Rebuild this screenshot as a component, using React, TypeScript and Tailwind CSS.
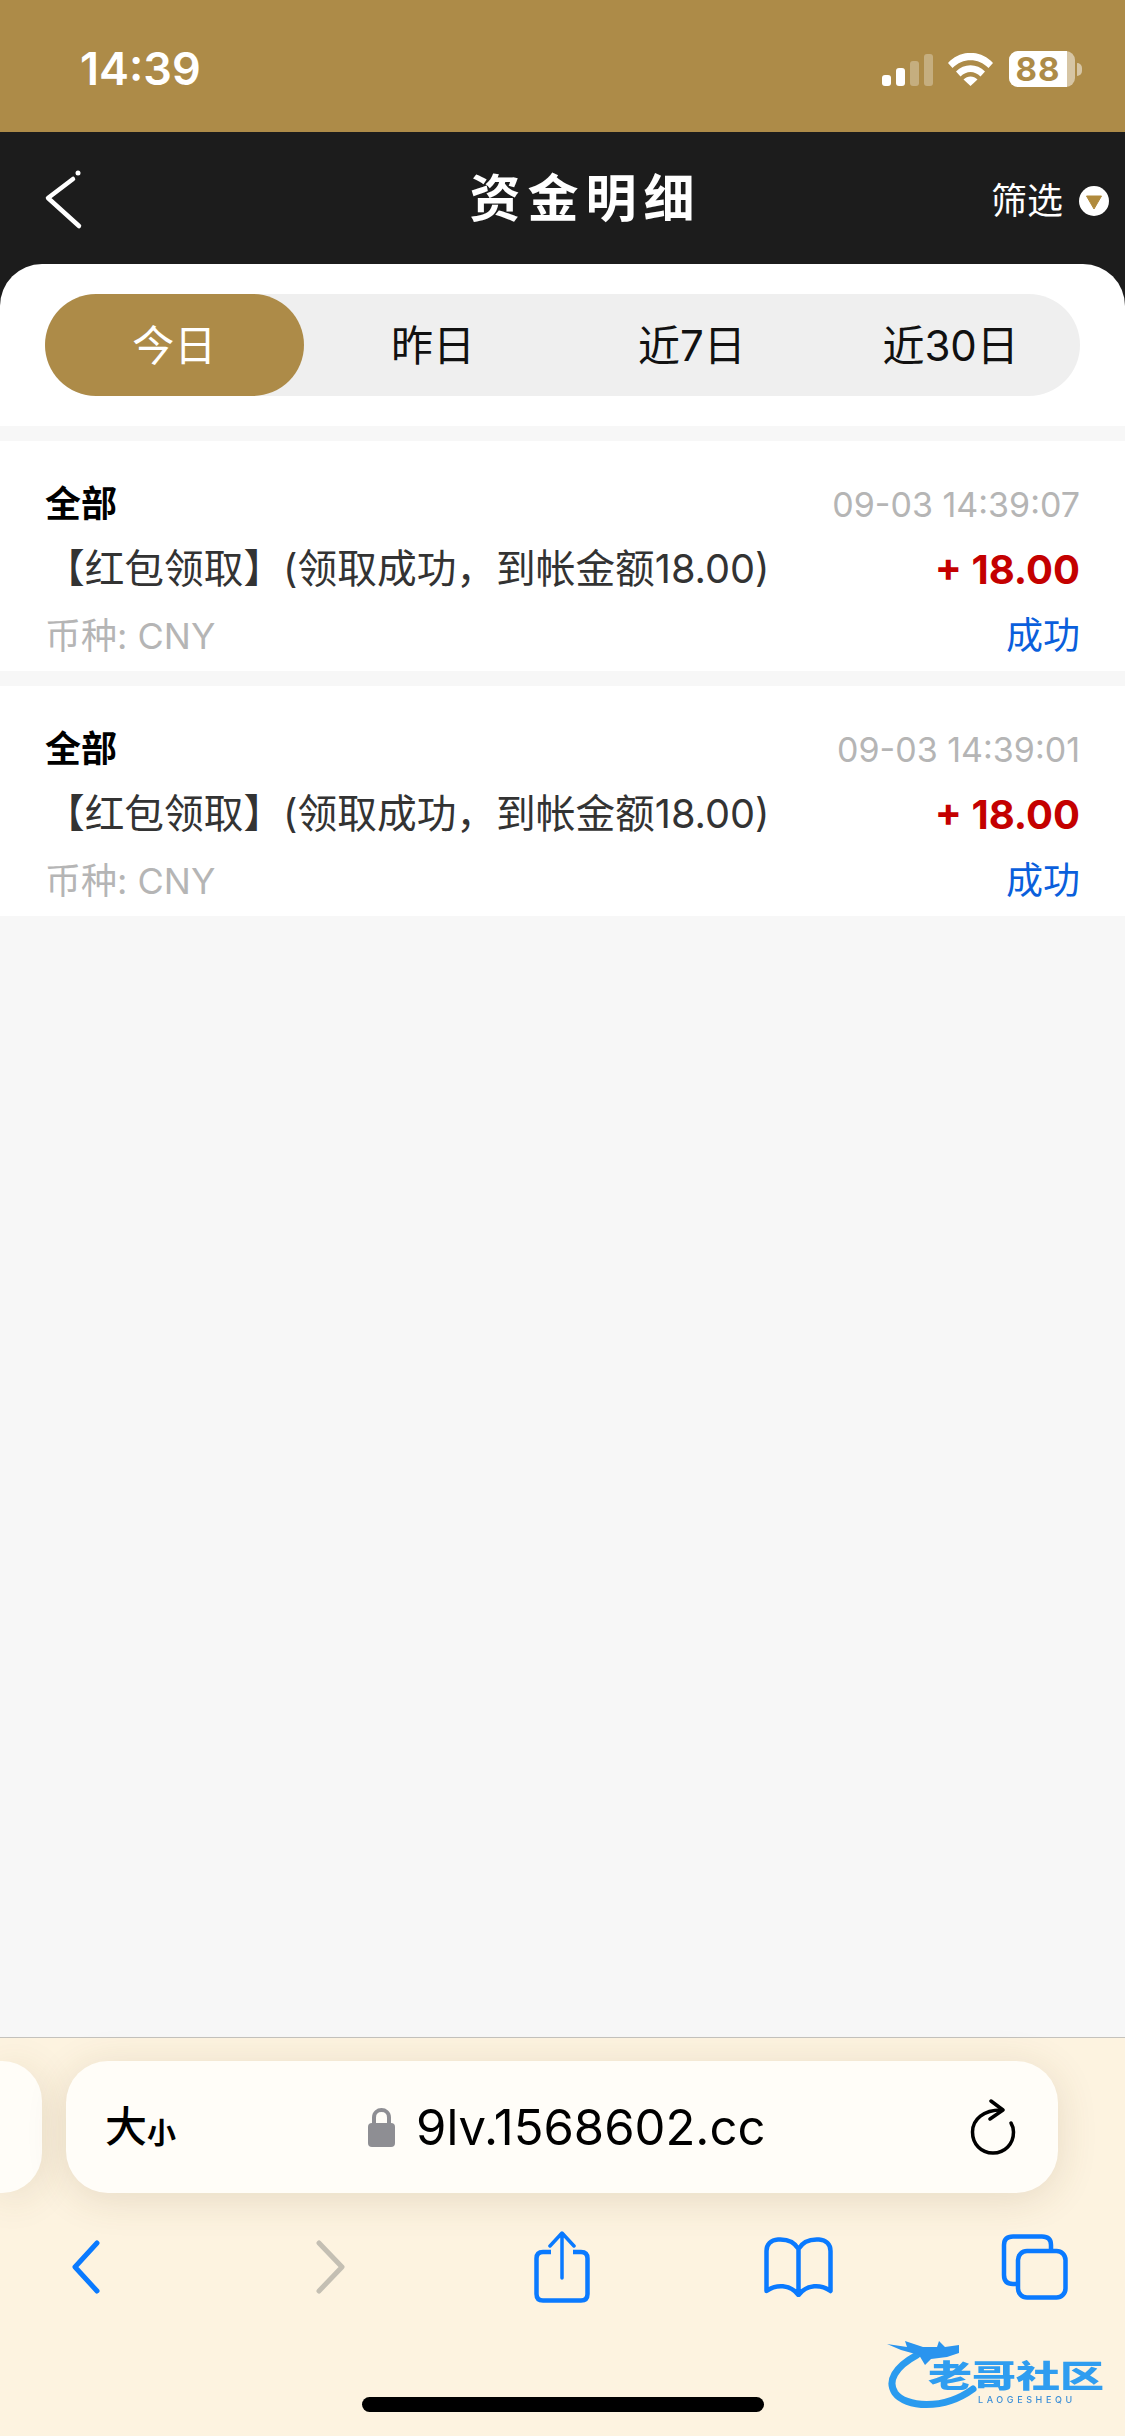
const cjk = 'font-["Inter","Noto_Sans_CJK_SC",sans-serif]';

const records = [
    { time: '09-03 14:39:07' },
    { time: '09-03 14:39:01' },
];

function StatusIcons() {
    return (
        <div className="flex items-center">
            {/* Signal */}
            <svg width="51" height="32" viewBox="0 0 51 32" className="mt-[1px]">
                <rect x="0" y="21" width="9" height="11" rx="3" fill="#fff" />
                <rect x="14" y="14" width="9" height="18" rx="3" fill="#fff" />
                <rect x="28" y="7" width="9" height="25" rx="3" fill="#fff" fillOpacity="0.3" />
                <rect x="42" y="0" width="9" height="32" rx="3" fill="#fff" fillOpacity="0.3" />
            </svg>
            {/* Wifi */}
            <svg width="45" height="33" viewBox="0 0 45 33" className="ml-[15px]">
                <path d="M0 10C12.500 -3.500 32.500 -3.500 45 10L40.500 15C30.500 4.500 14.500 4.500 4.500 15Z" fill="#fff" />
                <path d="M8 18.500C16 10 29 10 37 18.500L32.500 23.500C26.500 17.500 18.500 17.500 12.500 23.500Z" fill="#fff" />
                <path d="M15.500 26.500C19.500 22.500 25.500 22.500 29.500 26.500L22.500 33Z" fill="#fff" />
            </svg>
            {/* Battery */}
            <div className="ml-[16px] flex items-center">
                <div className="flex h-[36px] w-[66px] items-center rounded-[9px] bg-[#fff]/50">
                    <div className="flex h-full w-[58px] items-center justify-center rounded-l-[9px] bg-white text-[33px] leading-none font-bold tracking-[1px] text-[#ad8b48] font-['Inter',sans-serif]">
                        88
                    </div>
                </div>
                <div className="ml-[2px] h-[13px] w-[5px] rounded-r-full bg-[#fff]/50" />
            </div>
        </div>
    );
}

function Record({ time }: { time: string }) {
    return (
        <div className={`bg-white px-[45px] pt-[30px] pb-[2px] ${cjk}`}>
            <div className="flex h-[66px] items-center justify-between">
                <span className="text-[36px] font-bold text-black">全部</span>
                <span className="text-[34px] text-[#b5b5b5]">{time}</span>
            </div>
            <div className="flex h-[66px] items-center justify-between">
                <span className="text-[39.700px] text-[#333]">【红包领取】(领取成功，到帐金额18.00)</span>
                <span className="text-[40px] font-bold text-[#c40000]">+ 18.00</span>
            </div>
            <div className="flex h-[66px] items-center justify-between">
                <span className="text-[36px] text-[#b5b5b5]">币种: CNY</span>
                <span className="text-[37px] text-[#0a5fdc]">成功</span>
            </div>
        </div>
    );
}

export default function App() {
    return (
        <div className={`relative flex h-[2436px] w-[1125px] flex-col overflow-hidden bg-[#f7f7f7] ${cjk}`}>
            {/* Status bar */}
            <div className="flex h-[132px] items-center justify-between bg-[#ad8b48] pt-[6px] pr-[43px] pl-[80px]">
                <span className="text-[45px] font-semibold text-white">14:39</span>
                <StatusIcons />
            </div>

            {/* Header */}
            <div className="bg-[#1c1c1c]">
                <div className="relative flex h-[132px] items-center justify-center pl-[46px]">
                    <svg width="44" height="66" viewBox="0 0 44 66" className="absolute top-[33px] left-[42px]">
                        <polyline points="31,14 6,33 37,61" fill="none" stroke="#fff" strokeWidth="4.500" strokeLinecap="round" strokeLinejoin="round" />
                        <circle cx="36" cy="8" r="2.500" fill="#fff" />
                    </svg>
                    <h1 className="text-[51px] leading-none font-bold tracking-[7px] text-white">资金明细</h1>
                    <div className="absolute top-[51px] left-[991px] flex items-center">
                        <span className="text-[36px] leading-none text-white">筛选</span>
                        <svg width="30" height="30" viewBox="0 0 30 30" className="ml-[16px]">
                            <circle cx="15" cy="15" r="15" fill="#fff" />
                            <path d="M7.500 10H22.500L15 23Z" fill="#b08a3c" stroke="#b08a3c" strokeWidth="1" strokeLinejoin="round" />
                        </svg>
                    </div>
                </div>

                {/* Range tabs */}
                <div className="h-[162px] rounded-t-[42px] bg-white px-[45px] pt-[30px]">
                    <div className="grid h-[102px] w-[1035px] grid-cols-4 rounded-[51px] bg-[#efefef] text-[42px] text-[#111]">
                        <div className="flex items-center justify-center rounded-[51px] bg-[#ad8b48] text-white">今日</div>
                        <div className="flex items-center justify-center">昨日</div>
                        <div className="flex items-center justify-center">近7日</div>
                        <div className="flex items-center justify-center">近30日</div>
                    </div>
                </div>
            </div>

            {/* Records */}
            <div className="flex flex-1 flex-col gap-[15px] pt-[15px]">
                {records.map((r) => (
                    <Record key={r.time} time={r.time} />
                ))}
            </div>

            {/* Safari bottom bar */}
            <div className="h-[399px] border-t border-[#c4c2bd] bg-[#fdf3e0] pt-[23px]">
                <div className="flex h-[132px] gap-[24px]">
                    <div className="w-[42px] rounded-r-[40px] bg-[#fffdf8] shadow-[0_6px_40px_rgba(90,70,30,0.14)]" />
                    <div className="relative flex w-[992px] items-center rounded-[42px] bg-[#fffdf8] shadow-[0_6px_40px_rgba(90,70,30,0.14)]">
                        <div className="ml-[39px] flex items-end text-black">
                            <span className="text-[42px] leading-none font-medium">大</span>
                            <span className="text-[29px] leading-none font-bold">小</span>
                        </div>
                        <div className="absolute left-[302px] flex items-center">
                            <svg width="27" height="39" viewBox="0 0 27 39">
                                <path d="M6 17V9.500C6 -0.500 21 -0.500 21 9.500V17" fill="none" stroke="#8e8e93" strokeWidth="4" />
                                <rect x="0" y="15" width="27" height="24" rx="4" fill="#8e8e93" />
                            </svg>
                            <span className="ml-[21px] text-[49px] leading-none text-black">9lv.1568602.cc</span>
                        </div>
                        <svg width="46" height="56" viewBox="0 0 46 56" className="absolute left-[904px]">
                            <path d="M31 11C14 11 2.500 20 2.500 33C2.500 45 11 54 23 54C35 54 43.500 45 43.500 33C43.500 29.500 42.500 26.500 41 24" fill="none" stroke="#000" strokeWidth="3.500" strokeLinecap="round" />
                            <path d="M21 2L33 11L20 20" fill="none" stroke="#000" strokeWidth="3.500" strokeLinecap="round" strokeLinejoin="round" />
                        </svg>
                    </div>
                </div>

                {/* Toolbar */}
                <div className="flex h-[148px] items-center pl-[72px]">
                    <svg width="28" height="54" viewBox="0 0 28 54">
                        <polyline points="25,3 3,27 25,51" fill="none" stroke="#0a7aff" strokeWidth="5" strokeLinecap="round" strokeLinejoin="round" />
                    </svg>
                    <svg width="29" height="54" viewBox="0 0 29 54" className="ml-[216px]">
                        <polyline points="3,3 26,27 3,51" fill="none" stroke="#c4bfb3" strokeWidth="5" strokeLinecap="round" strokeLinejoin="round" />
                    </svg>
                    <svg width="56" height="72" viewBox="0 0 56 72" className="ml-[189px]">
                        <path d="M17 21H9C4.500 21 2.500 23 2.500 27.500V63C2.500 67.500 4.500 69.500 9 69.500H47C51.500 69.500 53.500 67.500 53.500 63V27.500C53.500 23 51.500 21 47 21H39" fill="none" stroke="#0a7aff" strokeWidth="4.500" />
                        <path d="M28 47V3M16 15L28 2L40 15" fill="none" stroke="#0a7aff" strokeWidth="3.500" strokeLinecap="round" strokeLinejoin="round" />
                    </svg>
                    <svg width="69" height="60" viewBox="0 0 69 60" className="ml-[174px]">
                        <path d="M34.500 12C30 4 22 2 14 2.500C7 3 2.500 7 2.500 14V54C12 47 26 47 34.500 58C43 47 57 47 66.500 54V14C66.500 7 62 3 55 2.500C47 2 39 4 34.500 12V56" fill="none" stroke="#0a7aff" strokeWidth="4.500" strokeLinejoin="round" />
                    </svg>
                    <svg width="67" height="66" viewBox="0 0 67 66" className="ml-[168px]">
                        <path d="M50 17V11C50 5 47 2.500 41 2.500H12C6 2.500 3 5 3 11V41C3 47 6 50 12 50H17" fill="none" stroke="#0a7aff" strokeWidth="4.500" />
                        <rect x="17" y="17" width="47.500" height="46.500" rx="9" fill="none" stroke="#0a7aff" strokeWidth="4.500" />
                    </svg>
                </div>

                {/* Home indicator */}
                <div className="mx-auto mt-[56px] h-[15px] w-[402px] rounded-full bg-black" />
            </div>

            {/* Watermark */}
            <div className="absolute top-[2335px] left-[887px] h-[74px] w-[224px] blur-[0.7px]">
                <svg width="224" height="74" viewBox="0 0 224 74" className="absolute top-0 left-0">
                    <path d="M30 20C8 32 0 46 8 58C18 72 56 76 86 54" fill="none" stroke="#2a9bef" strokeWidth="7" strokeLinecap="round" />
                    <path d="M0 9L20 12L18 6L36 12L50 12L52 6L58 12L72 10L72 18L60 22L44 24L38 30L32 20L14 15Z" fill="#2a94ee" />
                </svg>
                <span className="absolute top-[21px] left-[41px] origin-left scale-x-[1.42] text-[31px] leading-[40px] font-black whitespace-nowrap text-[#2f9df0]">
                    老哥社区
                </span>
                <span className="absolute top-[59px] left-[91px] text-[9px] leading-[11px] font-medium tracking-[3.600px] whitespace-nowrap text-[#3a8fd8]">
                    LAOGESHEQU
                </span>
            </div>
        </div>
    );
}
